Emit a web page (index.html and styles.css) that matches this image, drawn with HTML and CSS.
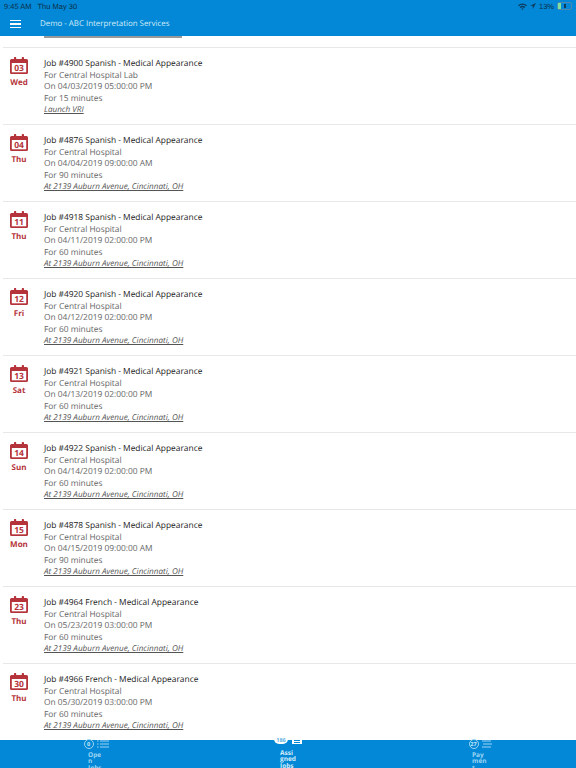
FILE: index.html
```html
<!DOCTYPE html>
<html lang="en">
<head>
    <meta charset="UTF-8">
    <title>Assigned Jobs</title>
    <link rel="stylesheet" href="styles.css">
</head>
<body>
    <svg class="defs" width="0" height="0">
        <symbol id="cal" viewBox="0 0 18 17">
            <path d="M1.500 2H4V1a1.100 1.100 0 0 1 2.200 0V2h5.600V1A1.100 1.100 0 0 1 14 1V2h2.500A1.500 1.500 0 0 1 18 3.500V15.500A1.500 1.500 0 0 1 16.500 17h-15A1.500 1.500 0 0 1 0 15.500V3.500A1.500 1.500 0 0 1 1.500 2z" fill="#b5333a"/>
            <rect x="1.800" y="6" width="14.400" height="9.300" fill="#fff"/>
        </symbol>
    </svg>

    <header class="topbar">
        <div class="status">
            <span>9:45 AM</span>
            <span class="status-date">Thu May 30</span>
            <span class="status-right">
                <svg width="9" height="7" viewBox="0 0 9 7"><path d="M0 2.300a6.400 6.400 0 0 1 9 0L8 3.300a5 5 0 0 0-7 0zM1.700 4a4 4 0 0 1 5.600 0l-1 1a2.600 2.600 0 0 0-3.600 0zM3.400 5.700a1.600 1.600 0 0 1 2.200 0L4.500 7z" fill="#10395a"/></svg>
                <svg width="6" height="6" viewBox="0 0 7 7"><path d="M7 0 0 3.200h3.200V7z" fill="#10395a"/></svg>
                <span>13%</span>
                <span class="battery"><span class="battery-fill"></span><span class="battery-bolt"></span></span>
            </span>
        </div>
        <div class="titlebar">
            <div class="burger"><i></i><i></i><i></i></div>
            <div class="title">Demo - ABC Interpretation Services</div>
        </div>
    </header>

    <main class="list">
        <div class="cut-link"></div>

        <div class="job">
            <div class="date">
                <div class="cal"><svg width="18" height="17"><use href="#cal"/></svg><span>03</span></div>
                <div class="weekday">Wed</div>
            </div>
            <div class="info">
                <div class="job-title">Job #4900 Spanish - Medical Appearance</div>
                <div>For Central Hospital Lab</div>
                <div>On 04/03/2019 05:00:00 PM</div>
                <div>For 15 minutes</div>
                <a href="#">Launch VRI</a>
            </div>
        </div>

        <div class="job">
            <div class="date">
                <div class="cal"><svg width="18" height="17"><use href="#cal"/></svg><span>04</span></div>
                <div class="weekday">Thu</div>
            </div>
            <div class="info">
                <div class="job-title">Job #4876 Spanish - Medical Appearance</div>
                <div>For Central Hospital</div>
                <div>On 04/04/2019 09:00:00 AM</div>
                <div>For 90 minutes</div>
                <a href="#">At 2139 Auburn Avenue, Cincinnati, OH</a>
            </div>
        </div>

        <div class="job">
            <div class="date">
                <div class="cal"><svg width="18" height="17"><use href="#cal"/></svg><span>11</span></div>
                <div class="weekday">Thu</div>
            </div>
            <div class="info">
                <div class="job-title">Job #4918 Spanish - Medical Appearance</div>
                <div>For Central Hospital</div>
                <div>On 04/11/2019 02:00:00 PM</div>
                <div>For 60 minutes</div>
                <a href="#">At 2139 Auburn Avenue, Cincinnati, OH</a>
            </div>
        </div>

        <div class="job">
            <div class="date">
                <div class="cal"><svg width="18" height="17"><use href="#cal"/></svg><span>12</span></div>
                <div class="weekday">Fri</div>
            </div>
            <div class="info">
                <div class="job-title">Job #4920 Spanish - Medical Appearance</div>
                <div>For Central Hospital</div>
                <div>On 04/12/2019 02:00:00 PM</div>
                <div>For 60 minutes</div>
                <a href="#">At 2139 Auburn Avenue, Cincinnati, OH</a>
            </div>
        </div>

        <div class="job">
            <div class="date">
                <div class="cal"><svg width="18" height="17"><use href="#cal"/></svg><span>13</span></div>
                <div class="weekday">Sat</div>
            </div>
            <div class="info">
                <div class="job-title">Job #4921 Spanish - Medical Appearance</div>
                <div>For Central Hospital</div>
                <div>On 04/13/2019 02:00:00 PM</div>
                <div>For 60 minutes</div>
                <a href="#">At 2139 Auburn Avenue, Cincinnati, OH</a>
            </div>
        </div>

        <div class="job">
            <div class="date">
                <div class="cal"><svg width="18" height="17"><use href="#cal"/></svg><span>14</span></div>
                <div class="weekday">Sun</div>
            </div>
            <div class="info">
                <div class="job-title">Job #4922 Spanish - Medical Appearance</div>
                <div>For Central Hospital</div>
                <div>On 04/14/2019 02:00:00 PM</div>
                <div>For 60 minutes</div>
                <a href="#">At 2139 Auburn Avenue, Cincinnati, OH</a>
            </div>
        </div>

        <div class="job">
            <div class="date">
                <div class="cal"><svg width="18" height="17"><use href="#cal"/></svg><span>15</span></div>
                <div class="weekday">Mon</div>
            </div>
            <div class="info">
                <div class="job-title">Job #4878 Spanish - Medical Appearance</div>
                <div>For Central Hospital</div>
                <div>On 04/15/2019 09:00:00 AM</div>
                <div>For 90 minutes</div>
                <a href="#">At 2139 Auburn Avenue, Cincinnati, OH</a>
            </div>
        </div>

        <div class="job">
            <div class="date">
                <div class="cal"><svg width="18" height="17"><use href="#cal"/></svg><span>23</span></div>
                <div class="weekday">Thu</div>
            </div>
            <div class="info">
                <div class="job-title">Job #4964 French - Medical Appearance</div>
                <div>For Central Hospital</div>
                <div>On 05/23/2019 03:00:00 PM</div>
                <div>For 60 minutes</div>
                <a href="#">At 2139 Auburn Avenue, Cincinnati, OH</a>
            </div>
        </div>

        <div class="job">
            <div class="date">
                <div class="cal"><svg width="18" height="17"><use href="#cal"/></svg><span>30</span></div>
                <div class="weekday">Thu</div>
            </div>
            <div class="info">
                <div class="job-title">Job #4966 French - Medical Appearance</div>
                <div>For Central Hospital</div>
                <div>On 05/30/2019 03:00:00 PM</div>
                <div>For 60 minutes</div>
                <a href="#">At 2139 Auburn Avenue, Cincinnati, OH</a>
            </div>
        </div>
    </main>

    <footer class="tabs">
        <div class="tab">
            <div class="tab-icons">
                <span class="count">0</span>
                <svg width="12" height="8" viewBox="0 0 12 8"><path d="M0 1h1.500M3 1h9M0 4h1.500M3 4h9M0 7h1.500M3 7h9" stroke="#9fd4f2" fill="none"/></svg>
            </div>
            <div class="tab-label">Open Jobs</div>
        </div>
        <div class="tab active">
            <div class="tab-icons">
                <span class="count">186</span>
                <span class="lines-box"><i></i><i></i></span>
            </div>
            <div class="tab-label">Assigned Jobs</div>
        </div>
        <div class="tab">
            <div class="tab-icons">
                <span class="count">27</span>
                <svg width="10" height="8" viewBox="0 0 10 8"><path d="M0 1h9M1 4h9M0 7h9" stroke="#9fd4f2" fill="none"/></svg>
            </div>
            <div class="tab-label">Payment</div>
        </div>
    </footer>
</body>
</html>
```

FILE: styles.css
```css
html, body {
    height: 100%;
}

body {
    margin: 0;
    height: 768px;
    overflow: hidden;
    display: flex;
    flex-direction: column;
    font-family: "Open Sans", sans-serif;
    text-rendering: geometricPrecision;
    background-color: #fff;
}

.defs {
    display: none;
}

/* top bar */
.topbar {
    height: 36px;
    flex-shrink: 0;
    background-color: #0288d6;
    display: flex;
    flex-direction: column;
}

.status {
    height: 12px;
    padding: 0 4px;
    display: flex;
    align-items: center;
    font-family: "Liberation Sans", sans-serif;
    font-size: 7.500px;
    color: #0d2f4a;
}

.status-date {
    margin-left: 6px;
}

.status-right {
    margin-left: auto;
    display: flex;
    align-items: center;
    gap: 3px;
}

.battery {
    position: relative;
    display: block;
    width: 13px;
    height: 6px;
    border: 1px solid #4d88b0;
    border-radius: 2px;
}

.battery-fill {
    display: block;
    width: 3px;
    height: 6px;
    background-color: #7fe0a0;
}

.battery-bolt {
    position: absolute;
    left: 6px;
    top: 1px;
    width: 2px;
    height: 4px;
    background-color: #10395a;
}

.titlebar {
    flex: 1;
    display: flex;
    align-items: center;
    padding-left: 10px;
}

.burger {
    width: 11px;
    display: flex;
    flex-direction: column;
    gap: 2px;
}

.burger i {
    display: block;
    height: 1.500px;
    background-color: #fff;
}

.title {
    margin-left: 19px;
    font-size: 7.900px;
    color: #d4ecfa;
}

/* job list */
.list {
    flex: 1;
    min-height: 0;
    overflow: hidden;
}

.cut-link {
    width: 138px;
    height: 1.500px;
    margin: 0 0 9.500px 44px;
    background-color: #999;
}

.job {
    height: 76px;
    margin-left: 3px;
    border-top: 1px solid #e8e8e8;
    display: flex;
}

.date {
    width: 32px;
    padding: 9px 0 0 7px;
    box-sizing: border-box;
    flex-shrink: 0;
}

.cal {
    position: relative;
    width: 18px;
    height: 17px;
}

.cal svg {
    display: block;
}

.cal span {
    position: absolute;
    left: 0;
    right: 0;
    top: 5.500px;
    text-align: center;
    font-size: 8.500px;
    line-height: 11px;
    font-weight: 700;
    color: #b5333a;
}

.weekday {
    width: 18px;
    margin-top: 3px;
    text-align: center;
    font-size: 8px;
    line-height: 11px;
    font-weight: 700;
    color: #b5333a;
}

.info {
    margin-left: 9px;
    padding-top: 10px;
    font-size: 8.400px;
    line-height: 11.600px;
    color: #666;
    white-space: nowrap;
}

.job-title {
    color: #222;
}

.info a {
    display: block;
    font-size: 8.150px;
    color: #555;
    font-style: italic;
    text-decoration: underline;
}

/* bottom tabs */
.tabs {
    height: 28px;
    flex-shrink: 0;
    display: grid;
    grid-template-columns: 1fr 1fr 1fr;
    background-color: #0288d6;
}

.tab {
    display: flex;
    flex-direction: column;
    align-items: center;
}

.tab-icons {
    height: 10px;
    margin-top: -1px;
    display: flex;
    align-items: center;
    gap: 3px;
}

.count {
    width: 10px;
    height: 10px;
    box-sizing: border-box;
    border: 1px solid #9fd4f2;
    border-radius: 50%;
    text-align: center;
    font-size: 5.500px;
    line-height: 8px;
    font-weight: 700;
    color: #cde8f8;
}

.tab-label {
    width: 16px;
    margin-top: 2.500px;
    font-size: 6.500px;
    line-height: 6.700px;
    font-weight: 700;
    overflow-wrap: anywhere;
    color: #9fd4f2;
}

.tab.active .tab-icons {
    margin-top: 0;
    height: 4px;
    align-items: flex-start;
    gap: 4px;
}

.tab.active .count {
    width: 14px;
    height: 8px;
    margin-top: -4px;
    border: none;
    border-radius: 0 0 5px 5px;
    background-color: #fff;
    color: #5fb3e4;
    line-height: 8px;
}

.lines-box {
    width: 10px;
    height: 8px;
    margin-top: -4px;
    background-color: #fff;
    display: flex;
    flex-direction: column;
    gap: 1px;
    padding: 4px 2px 0;
    box-sizing: border-box;
}

.lines-box i {
    display: block;
    height: 1px;
    background-color: #0288d6;
}

.tab.active .tab-label {
    margin-top: 5.500px;
    color: #d4ecfa;
}
```
